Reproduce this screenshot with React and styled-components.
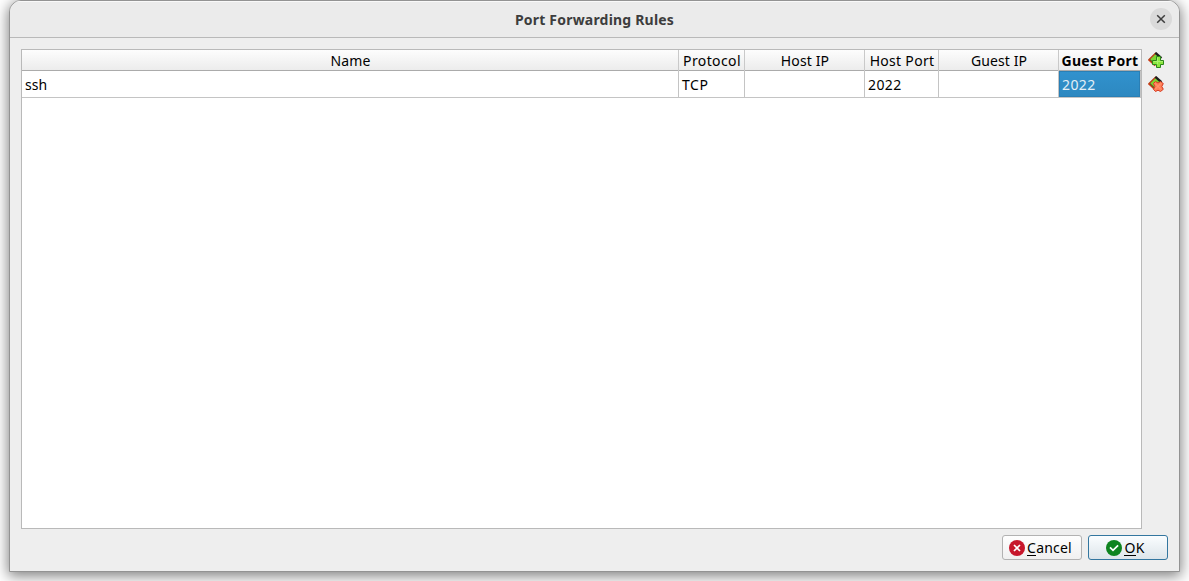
import React from "react";
import styled, { createGlobalStyle, css } from "styled-components";

const GlobalStyle = createGlobalStyle`
  * { box-sizing: border-box; }
  html, body { margin: 0; background: #fff; overflow: hidden; }
  body { font-family: "Noto Sans", "Open Sans", sans-serif; font-size: 14px; color: #000; }
`;

const Desktop = styled.div`
  width: 1189px;
  height: 581px;
  padding: 0 9px 9px;
  overflow: hidden;
`;

const Dialog = styled.div`
  display: flex;
  flex-direction: column;
  width: 1171px;
  height: 572px;
  background: #eeeeee;
  border: 1px solid #939393;
  border-radius: 12px 12px 0 0;
  box-shadow: 0 3px 14px 1px rgba(0, 0, 0, 0.5);
  overflow: hidden;
`;

const TitleBar = styled.header`
  display: grid;
  grid-template-columns: 40px 1fr 40px;
  align-items: center;
  flex: none;
  height: 37px;
  background: #ebebeb;
  border-bottom: 1px solid #b9b9b9;
  box-shadow: inset 0 1px #f9f9f9;
`;

const Title = styled.h1`
  grid-column: 2;
  margin: 0;
  padding-top: 2px;
  text-align: center;
  font-size: 14px;
  line-height: 20px;
  font-weight: 700;
  letter-spacing: 0.2px;
  color: #3d3d3d;
`;

const CloseButton = styled.button`
  display: flex;
  align-items: center;
  justify-content: center;
  width: 22px;
  height: 22px;
  margin-left: 11px;
  padding: 0;
  border: 0;
  border-radius: 50%;
  background: #dadada;
`;

const Content = styled.main`
  display: flex;
  gap: 6px;
  height: 480px;
  margin: 11px 0 0 11px;
`;

const Table = styled.div`
  width: 1121px;
  height: 480px;
  background: #fff;
  border: 1px solid #b9b9b9;
`;

const Row = styled.div`
  display: grid;
  grid-template-columns: 657px 66px 120px 74px 120px 82px;
`;

const HeaderRow = styled(Row)`
  height: 21px;
  background: linear-gradient(#fdfdfd, #ececec);
  border-bottom: 1px solid #ababab;
`;

const HeaderCell = styled.div`
  display: flex;
  justify-content: center;
  padding-left: 1px;
  border-right: 1px solid #c9c9c9;
  line-height: 21px;
  white-space: nowrap;
  letter-spacing: ${(p) => p.$track || 0}px;
  font-weight: ${(p) => (p.$active ? 700 : 400)};
  &:last-child { border-right-color: transparent; }
`;

const Cell = styled.div`
  height: 27px;
  padding-left: 3px;
  line-height: 27px;
  border-right: 1px solid #c4c4c4;
  border-bottom: 1px solid #c4c4c4;
  letter-spacing: ${(p) => p.$track || 0}px;
  ${(p) =>
    p.$selected &&
    css`
      color: #e3eff7;
      background: linear-gradient(#3192ce, #2d88c0) padding-box;
      box-shadow: inset 0 0 0 1px #2a7fb5;
    `}
`;

const SideTools = styled.div`
  display: flex;
  flex-direction: column;
  gap: 8px;
  padding-top: 3px;
`;

const ToolButton = styled.button`
  display: block;
  width: 16px;
  height: 16px;
  padding: 0;
  border: 0;
  background: none;
  svg { display: block; }
`;

const Footer = styled.footer`
  display: flex;
  justify-content: flex-end;
  gap: 6px;
  padding: 6px 11px 0 0;
`;

const Button = styled.button`
  display: flex;
  align-items: center;
  justify-content: center;
  gap: 2px;
  width: 80px;
  height: 25px;
  padding: 0 ${(p) => (p.$primary ? 5 : 3)}px 0 0;
  font: inherit;
  color: #000;
  border: 1px solid ${(p) => (p.$primary ? "#33769f" : "#b2b2b2")};
  border-radius: 3px;
  background: ${(p) => (p.$primary ? "linear-gradient(#fafdff, #dde5ea)" : "linear-gradient(#fefefe, #f0f0f0)")};
  letter-spacing: ${(p) => p.$track || 0}px;
  svg { flex: none; }
`;

const Label = styled.span`
  line-height: 20px;
  padding-top: 1px;
`;

const Mnemonic = styled.span`
  display: inline-block;
  height: 18px;
  line-height: 20px;
  border-bottom: 1px solid #000;
`;

const columns = [
  { name: "Name", track: 0.1 },
  { name: "Protocol", track: 0.4 },
  { name: "Host IP", track: 0.15 },
  { name: "Host Port", track: 0.3 },
  { name: "Guest IP", track: 0.1 },
  { name: "Guest Port", track: 0.28, active: true },
];

const rule = [
  { value: "ssh", track: 0 },
  { value: "TCP", track: 0.6 },
  { value: "" },
  { value: "2022", track: 0.4 },
  { value: "" },
  { value: "2022", track: 0.4, selected: true },
];

const Diamond = () => (
  <>
    <path d="M.7 7.7 7.8.7 13.5 6 7.5 13.5z" fill="#79d530" />
    <path d="M.6 7.9 8 .7" stroke="#b8401c" strokeWidth="1.4" />
    <path d="m7.4.8 6 5.4" stroke="#1e1e1e" strokeWidth="2.3" />
    <path d="m.6 7.6 6.5 6.2" stroke="#c93a14" strokeWidth="1.5" />
    <path d="m2 7.6 5 4.8" stroke="#4a3a1c" strokeWidth="1" />
  </>
);

const AddIcon = () => (
  <svg width="16" height="16" viewBox="0 0 16 16" fill="none">
    <Diamond />
    <path d="M8.5 4.5h4v4h3v4h-3v3h-4v-3h-4v-4h4z" fill="#8be63f" stroke="#2c861a" />
    <path d="M9.5 12V5.5M5.5 9.5H15" stroke="#aaf16c" />
  </svg>
);

const RemoveIcon = () => (
  <svg width="16" height="16" viewBox="0 0 16 16" fill="none">
    <Diamond />
    <path d="m5.5 7.5 2-2L10 7l2.5-1.5 2.8 2-1.5 3 1.5 2.8-2.8 2.2-2.5-1.3-2.5 1.3-2-2.2 1.3-2.8z" fill="#ff8058" stroke="#d63a22" />
    <path d="m7 7.4 6 6m0-6-6 6" stroke="#ff9a76" />
  </svg>
);

const CancelIcon = () => (
  <svg width="16" height="16" viewBox="0 0 16 16" fill="none">
    <circle cx="8" cy="8" r="8" fill="#c7162b" />
    <path d="m5 5 6 6m0-6-6 6" stroke="#fff" strokeWidth="1.7" />
  </svg>
);

const OkIcon = () => (
  <svg width="16" height="16" viewBox="0 0 16 16" fill="none">
    <circle cx="8" cy="8" r="8" fill="#0e8420" />
    <path d="m4 7.4 3 3 5.1-5.1" stroke="#fff" strokeWidth="1.7" />
  </svg>
);

const CloseIcon = () => (
  <svg width="10" height="10" viewBox="0 0 10 10" fill="none">
    <path d="m1.2 1.2 7.6 7.6m0-7.6-7.6 7.6" stroke="#3d3d3d" strokeWidth="1.5" />
  </svg>
);

export default function App() {
  return (
    <>
      <GlobalStyle />
      <Desktop>
        <Dialog>
          <TitleBar>
            <Title>Port Forwarding Rules</Title>
            <CloseButton aria-label="Close"><CloseIcon /></CloseButton>
          </TitleBar>
          <Content>
            <Table>
              <HeaderRow>
                {columns.map((c) => (
                  <HeaderCell key={c.name} $track={c.track} $active={c.active}>
                    <span>{c.name}</span>
                  </HeaderCell>
                ))}
              </HeaderRow>
              <Row>
                {rule.map((c, i) => (
                  <Cell key={i} $track={c.track} $selected={c.selected}>{c.value}</Cell>
                ))}
              </Row>
            </Table>
            <SideTools>
              <ToolButton aria-label="Add rule"><AddIcon /></ToolButton>
              <ToolButton aria-label="Remove rule"><RemoveIcon /></ToolButton>
            </SideTools>
          </Content>
          <Footer>
            <Button $track={0.2}>
              <CancelIcon />
              <Label><Mnemonic>C</Mnemonic>ancel</Label>
            </Button>
            <Button $primary $track={0.3}>
              <OkIcon />
              <Label><Mnemonic>O</Mnemonic>K</Label>
            </Button>
          </Footer>
        </Dialog>
      </Desktop>
    </>
  );
}
